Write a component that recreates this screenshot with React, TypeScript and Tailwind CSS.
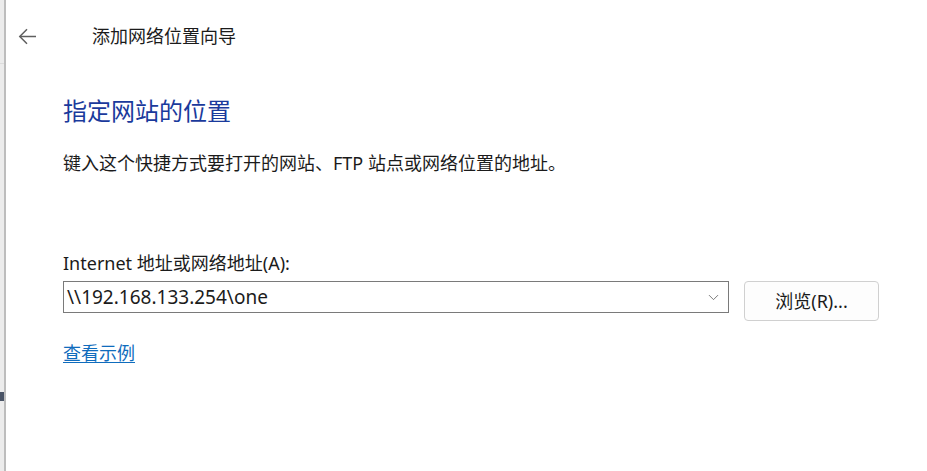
import { ChevronDown } from "lucide-react";

const font = { fontFamily: '"Noto Sans", "Noto Sans CJK SC", sans-serif' };

function BackArrow() {
  return (
    <svg width="19" height="17" viewBox="0 0 19 17" fill="none" stroke="#5f5f5f" strokeWidth="1.5">
      <path d="M18 8.5H1.8" />
      <path d="M9 1.3L1.8 8.5l7.2 7.2" />
    </svg>
  );
}

export default function App() {
  return (
    <div className="flex h-[471px] w-[927px] bg-white text-[#1b1b1b]" style={font}>
      {/* edge of the window behind */}
      <div className="flex w-[6px] shrink-0 flex-col border-r-2 border-[#bdbdbd] bg-[#ececec]">
        <div className="h-[63px]" />
        <div className="h-px bg-[#dcdcdc]" />
        <div className="h-[328px]" />
        <div className="h-[9px] bg-[#4a5466]" />
      </div>

      <main className="flex flex-1 flex-col">
        <header className="flex h-[72px] items-center">
          <button className="ml-[11px] flex h-[20px] w-[21px] items-center justify-center">
            <BackArrow />
          </button>
          <h1 className="ml-[54px] text-[18px] leading-[24px]">添加网络位置向导</h1>
        </header>

        <div className="flex flex-col pl-[57px]">
          <h2 className="mt-[23px] text-[24px] leading-[32px] text-[#1a3a9c]">指定网站的位置</h2>

          <p className="mt-[23px] text-[18px] leading-[26px]">
            键入这个快捷方式要打开的网站、FTP 站点或网络位置的地址。
          </p>

          <label className="mt-[74px] text-[18px] leading-[26px]">Internet 地址或网络地址(A):</label>

          <div className="mt-[5px] flex items-start">
            <div className="flex h-[32px] w-[666px] items-center border border-[#7a7a7a] bg-white pl-[3px] pr-[6px]">
              <span className="flex-1 text-[19px] leading-[30px]">\\192.168.133.254\one</span>
              <ChevronDown size={17} strokeWidth={1.1} color="#555" />
            </div>
            <button className="ml-[15px] h-[40px] w-[135px] rounded-[4px] border border-[#d0d0d0] bg-[#fdfdfd] text-[18px] leading-[26px]">
              浏览(R)...
            </button>
          </div>

          <a href="#" className="mt-[19px] self-start text-[18px] leading-[26px] text-[#0f6cbd] underline underline-offset-2">
            查看示例
          </a>
        </div>
      </main>
    </div>
  );
}
